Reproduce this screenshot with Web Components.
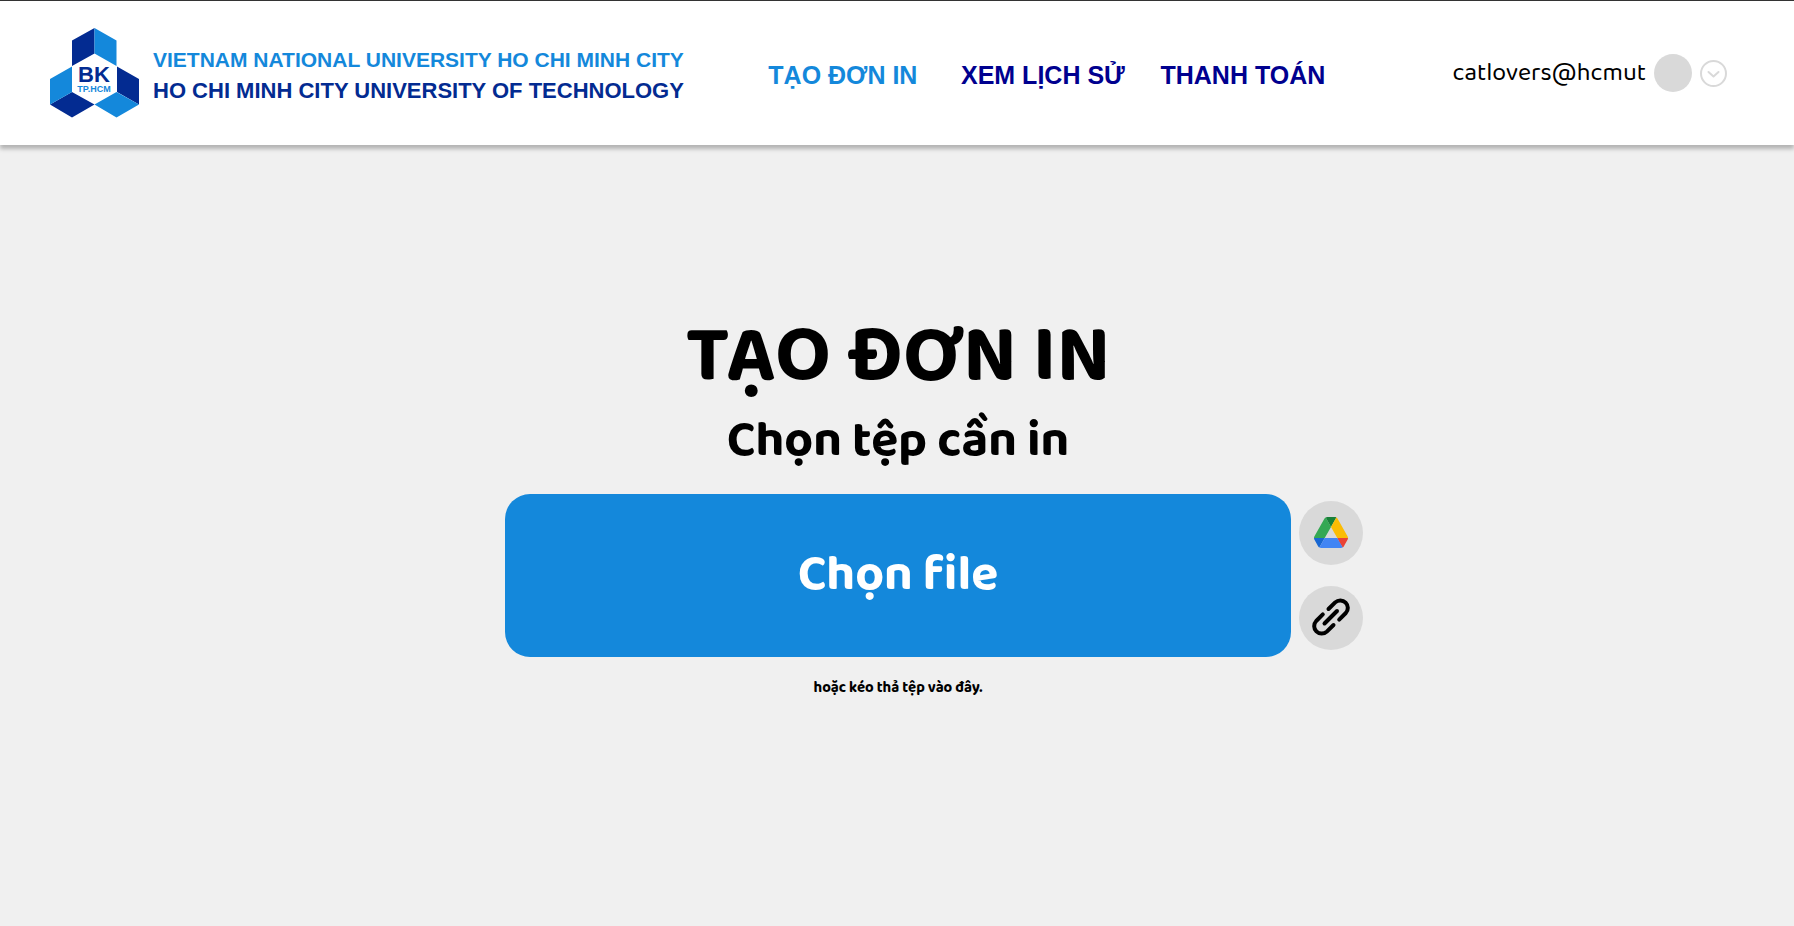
<!DOCTYPE html>
<html lang="vi">
<head>
<meta charset="utf-8">
<meta name="viewport" content="width=device-width, initial-scale=1">
<title>Tạo đơn in</title>
<style>
  body {
    margin: 0;
    min-height: 100vh;
    background: #f0f0f0;
    color: #000;
    font-family: "Baloo 2", "Lato", "Noto Sans", sans-serif;
  }
</style>
</head>
<body>
<print-app></print-app>

<template id="app-tpl">
  <style>
    :host { display: flex; flex-direction: column; min-height: 100vh; }
  </style>
  <site-header>
    <brand-logo></brand-logo>
    <nav-menu slot="nav">
      <nav-item active>TẠO ĐƠN IN</nav-item>
      <nav-item>XEM LỊCH SỬ</nav-item>
      <nav-item>THANH TOÁN</nav-item>
    </nav-menu>
    <account-menu slot="account">catlovers@hcmut</account-menu>
  </site-header>
  <upload-panel>
    <span slot="title">TẠO ĐƠN IN</span>
    <span slot="subtitle">Chọn tệp cần in</span>
    <span slot="action">Chọn file</span>
    <round-button slot="sources" label="Google Drive">
      <svg width="34" height="31" viewBox="0 0 87.3 78" preserveAspectRatio="none" aria-hidden="true">
        <path fill="#1967d2" d="m6.6 66.85 3.85 6.65c.8 1.4 1.95 2.5 3.3 3.3l13.75-23.8h-27.5c0 1.55.4 3.1 1.2 4.5z"/>
        <path fill="#34a853" d="m43.65 25-13.75-23.8c-1.35.8-2.5 1.9-3.3 3.3l-25.4 44a9.06 9.06 0 0 0 -1.2 4.5h27.5z"/>
        <path fill="#ea4335" d="m73.55 76.8c1.35-.8 2.5-1.9 3.3-3.3l1.6-2.75 7.65-13.25c.8-1.4 1.2-2.95 1.2-4.5h-27.5l5.85 11.5z"/>
        <path fill="#188038" d="m43.65 25 13.75-23.8c-1.35-.8-2.9-1.2-4.5-1.2h-18.5c-1.6 0-3.15.45-4.5 1.2z"/>
        <path fill="#4285f4" d="m59.8 53h-32.3l-13.75 23.8c1.35.8 2.9 1.2 4.5 1.2h50.8c1.6 0 3.15-.45 4.5-1.2z"/>
        <path fill="#fbbc04" d="m73.4 26.5-12.7-22c-.8-1.4-1.95-2.5-3.3-3.3l-13.75 23.8 16.15 28h27.45c0-1.55-.4-3.1-1.2-4.5z"/>
      </svg>
    </round-button>
    <round-button slot="sources" label="Liên kết">
      <svg width="40" height="40" viewBox="0 0 40 40" fill="none" stroke="#000" stroke-width="4" stroke-linecap="round" stroke-linejoin="round" aria-hidden="true">
        <path d="M17.500 12 24.200 5.400A7.500 7.500 0 0 1 34.800 16L28.200 22.600"/>
        <path d="M11.800 17.400 5.200 24A7.500 7.500 0 0 0 15.800 34.600L22.500 28"/>
        <path d="M13.500 26.500 26 14"/>
      </svg>
    </round-button>
    <span slot="note">hoặc kéo thả tệp vào đây.</span>
  </upload-panel>
</template>

<template id="header-tpl">
  <style>
    :host { display: block; position: relative; }
    header {
      display: flex;
      align-items: center;
      box-sizing: border-box;
      height: 145px;
      padding: 0 67px 0 50px;
      background: #fff;
      border-top: 1px solid #333;
      box-shadow: 0 4px 4px rgba(0, 0, 0, .25);
    }
    .nav { margin-left: 59px; }
    .account { margin-left: auto; }
  </style>
  <header>
    <slot></slot>
    <div class="nav"><slot name="nav"></slot></div>
    <div class="account"><slot name="account"></slot></div>
  </header>
</template>

<template id="brand-tpl">
  <style>
    :host { display: block; flex: none; }
    a {
      display: flex;
      align-items: center;
      gap: 14px;
      text-decoration: none;
      font-family: "Liberation Sans", Arial, sans-serif;
      font-weight: 700;
      line-height: 31px;
      white-space: nowrap;
    }
    svg { display: block; flex: none; }
    div { padding-top: 4px; }
    span { display: block; }
    .vnu { color: #1488db; font-size: 21px; }
    .hcmut { color: #032b91; font-size: 22px; }
    text { font-weight: 700; text-anchor: middle; }
  </style>
  <a href="#">
    <svg width="89" height="90" viewBox="0 0 89 90" role="img" aria-label="BK TP.HCM">
      <path fill="#032b91" d="M44.500 0V25.500L22 38V12.500zM67 38.500 89 51V76.500L67 64zM22 64 44.500 76.500 22 89.500 0 76.500z"/>
      <path fill="#1488db" d="M44.500 0 66.500 12.500V38L44.500 25.500zM22 38.500V64L0 76.500V51zM66.500 64 89 76.500 66.500 89.500 44.500 76.500z"/>
      <text x="44" y="54" font-size="22" fill="#032b91">BK</text>
      <text x="44" y="64" font-size="9" fill="#1488db">TP.HCM</text>
    </svg>
    <div>
      <span class="vnu">VIETNAM NATIONAL UNIVERSITY HO CHI MINH CITY</span>
      <span class="hcmut">HO CHI MINH CITY UNIVERSITY OF TECHNOLOGY</span>
    </div>
  </a>
</template>

<template id="nav-tpl">
  <style>
    :host { display: block; }
    nav { display: grid; grid-template-columns: repeat(3, 200px); }
  </style>
  <nav><slot></slot></nav>
</template>

<template id="nav-item-tpl">
  <style>
    :host { display: block; text-align: center; }
    a {
      display: block;
      padding-top: 4px;
      color: #00008f;
      font: 700 25px/32px "Liberation Sans", Arial, sans-serif;
      text-decoration: none;
      white-space: nowrap;
    }
    :host([active]) a { color: #1488db; }
  </style>
  <a href="#"><slot></slot></a>
</template>

<template id="account-tpl">
  <style>
    :host { display: flex; align-items: center; }
    .name { font-size: 25px; line-height: 40px; }
    .avatar { width: 38px; height: 38px; margin: 0 8px; border-radius: 50%; background: #d9d9d9; }
    button { display: block; padding: 0; border: 0; background: none; cursor: pointer; }
    svg { display: block; }
  </style>
  <span class="name"><slot></slot></span>
  <span class="avatar"></span>
  <button type="button" aria-label="Tài khoản">
    <svg width="27" height="27" viewBox="0 0 27 27" fill="none" stroke="#d9d9d9" stroke-width="2">
      <circle cx="13.500" cy="13.500" r="12.500"/>
      <path d="M8.500 12 13.500 16.500 18.500 12" stroke-linecap="round" stroke-linejoin="round"/>
    </svg>
  </button>
</template>

<template id="upload-tpl">
  <style>
    :host { display: block; padding: 168px 24px 40px 26px; text-align: center; }
    h1, h2, p { margin: 0; }
    h1 { margin-bottom: 8px; font-size: 80px; font-weight: 700; line-height: 88px; }
    h2 { font-size: 50px; font-weight: 700; line-height: 64px; }
    .row {
      display: grid;
      grid-template-columns: 1fr minmax(0, 786px) 1fr;
      align-items: center;
      gap: 8px;
      margin: 21px 0;
    }
    .pick {
      grid-column: 2;
      height: 163px;
      padding: 0 0 2px;
      border: 0;
      border-radius: 25px;
      background: #1488db;
      color: #fff;
      font-family: inherit;
      font-size: 50px;
      font-weight: 700;
      line-height: 64px;
      cursor: pointer;
    }
    .sources { display: flex; flex-direction: column; gap: 21px; }
    p { font-size: 15px; font-weight: 700; line-height: 20px; }
  </style>
  <main>
    <h1><slot name="title"></slot></h1>
    <h2><slot name="subtitle"></slot></h2>
    <div class="row">
      <button class="pick" type="button"><slot name="action"></slot></button>
      <div class="sources"><slot name="sources"></slot></div>
    </div>
    <p><slot name="note"></slot></p>
  </main>
</template>

<template id="round-tpl">
  <style>
    :host { display: block; width: 64px; }
    button {
      display: grid;
      place-items: center;
      width: 64px;
      height: 64px;
      padding: 0 0 2px;
      border: 0;
      border-radius: 50%;
      background: #d9d9d9;
      cursor: pointer;
    }
    ::slotted(svg) { display: block; }
  </style>
  <button type="button"><slot></slot></button>
</template>

<script>
  class TemplateElement extends HTMLElement {
    constructor() {
      super();
      const template = document.getElementById(this.constructor.template);
      this.attachShadow({ mode: "open" }).append(template.content.cloneNode(true));
    }
  }

  const define = (name, template) =>
    customElements.define(name, class extends TemplateElement {
      static template = template;
    });

  class RoundButton extends TemplateElement {
    static template = "round-tpl";
    connectedCallback() {
      this.shadowRoot.querySelector("button").setAttribute("aria-label", this.getAttribute("label"));
    }
  }

  customElements.define("round-button", RoundButton);
  define("brand-logo", "brand-tpl");
  define("nav-item", "nav-item-tpl");
  define("nav-menu", "nav-tpl");
  define("account-menu", "account-tpl");
  define("site-header", "header-tpl");
  define("upload-panel", "upload-tpl");
  define("print-app", "app-tpl");
</script>
</body>
</html>
